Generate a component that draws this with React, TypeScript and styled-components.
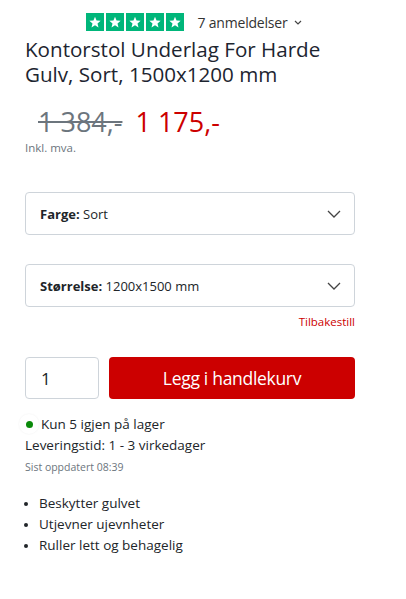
import React from "react";
import styled, { createGlobalStyle } from "styled-components";

const Global = createGlobalStyle`
  html, body { margin: 0; padding: 0; background: #fff; }
  body { font-family: "Open Sans", "Noto Sans", Arial, sans-serif; color: #212529; }
  * { box-sizing: border-box; }
`;

const Page = styled.div`
  width: 406px;
  padding: 0 51px 0 25px;
  display: flex;
  flex-direction: column;
`;

const ReviewRow = styled.div`
  display: flex;
  align-items: center;
  justify-content: center;
  gap: 14px;
  padding-top: 13px;
  padding-left: 8px;
  height: 31px;
`;

const Stars = styled.div`
  display: flex;
  gap: 2px;
`;

const StarBox = styled.div`
  width: 18px;
  height: 18px;
  background: #00b67a;
  display: flex;
  align-items: center;
  justify-content: center;
`;

const ReviewText = styled.span`
  font-size: 14px;
  color: #333;
  display: flex;
  align-items: center;
  gap: 7px;
  letter-spacing: -0.2px;
`;

const Title = styled.h1`
  margin: 6px 0 0;
  font-size: 20.6px;
  line-height: 24.5px;
  font-weight: 500;
  color: #1d2530;
`;

const PriceRow = styled.div`
  display: flex;
  align-items: baseline;
  gap: 13px;
  margin-top: 21px;
  padding-left: 13px;
  line-height: 30px;
`;

const OldPrice = styled.span`
  font-size: 27px;
  color: #6c757d;
  text-decoration: line-through;
  text-decoration-thickness: 2px;
`;

const NewPrice = styled.span`
  font-size: 27px;
  color: #cc0000;
`;

const VatNote = styled.div`
  font-size: 11.5px;
  line-height: 15px;
  color: #6c757d;
  margin-top: 3px;
`;

const Select = styled.div<{ $top: number }>`
  margin-top: ${(p) => p.$top}px;
  height: 43px;
  border: 1px solid #ced4da;
  border-radius: 4px;
  display: flex;
  align-items: center;
  justify-content: space-between;
  padding: 0 13px 0 14px;
  font-size: 13px;
  color: #212529;
`;

const Label = styled.b`
  font-weight: 700;
`;

const Reset = styled.div`
  align-self: flex-end;
  font-size: 11.5px;
  color: #cc0000;
  margin-top: 7px;
  line-height: 16px;
`;

const CartRow = styled.div`
  display: flex;
  gap: 10px;
  margin-top: 27px;
`;

const Qty = styled.div`
  width: 74px;
  height: 42px;
  border: 1px solid #ced4da;
  border-radius: 4px;
  display: flex;
  align-items: center;
  padding-left: 15px;
  font-size: 17px;
  color: #212529;
`;

const CartButton = styled.button`
  flex: 1;
  height: 42px;
  border: none;
  border-radius: 4px;
  background: #cc0000;
  color: #fff;
  font-family: inherit;
  font-size: 17.5px;
  letter-spacing: -0.3px;
`;

const Stock = styled.div`
  display: flex;
  align-items: center;
  gap: 2px;
  margin-top: 15px;
  font-size: 13.5px;
  line-height: 20px;
`;

const Dot = styled.span`
  width: 20px;
  height: 20px;
  border-radius: 50%;
  margin-left: -6px;
  box-shadow: 0 0 2px rgba(0, 0, 0, 0.07);
  display: flex;
  align-items: center;
  justify-content: center;
  &::after {
    content: "";
    width: 7px;
    height: 7px;
    border-radius: 50%;
    background: #0a8a0a;
  }
`;

const InfoLine = styled.div`
  font-size: 13.5px;
  line-height: 20px;
  margin-top: 1px;
`;

const Updated = styled.div`
  font-size: 10.5px;
  color: #6c757d;
  margin-top: 4px;
  line-height: 16px;
`;

const Bullets = styled.ul`
  margin: 18px 0 0;
  padding: 0 0 0 14px;
  font-size: 13.5px;
  line-height: 21px;
  li::marker { font-size: 12px; }
`;

const Star = () => (
  <svg width="12" height="12" viewBox="0 0 24 24">
    <path
      fill="#fff"
      d="M12 1.5l3.1 7.6 8.2.6-6.3 5.3 2 8-7-4.3-7 4.3 2-8L.7 9.7l8.2-.6z"
    />
  </svg>
);

const Chevron = () => (
  <svg width="14" height="8" viewBox="0 0 14 8" fill="none">
    <path d="M1 1l6 6 6-6" stroke="#444" strokeWidth="1.3" />
  </svg>
);

const SmallChevron = () => (
  <svg width="8" height="5" viewBox="0 0 8 5" fill="none">
    <path d="M1 1l3 3 3-3" stroke="#444" strokeWidth="1.2" />
  </svg>
);

export default function App() {
  return (
    <>
      <Global />
      <Page>
        <ReviewRow>
          <Stars>
            {[0, 1, 2, 3, 4].map((i) => (
              <StarBox key={i}>
                <Star />
              </StarBox>
            ))}
          </Stars>
          <ReviewText>
            7 anmeldelser <SmallChevron />
          </ReviewText>
        </ReviewRow>
        <Title>Kontorstol Underlag For Harde Gulv, Sort, 1500x1200 mm</Title>
        <PriceRow>
          <OldPrice>1 384,-</OldPrice>
          <NewPrice>1 175,-</NewPrice>
        </PriceRow>
        <VatNote>Inkl. mva.</VatNote>
        <Select $top={37}>
          <span>
            <Label>Farge:</Label> Sort
          </span>
          <Chevron />
        </Select>
        <Select $top={29}>
          <span>
            <Label>Størrelse:</Label> 1200x1500 mm
          </span>
          <Chevron />
        </Select>
        <Reset>Tilbakestill</Reset>
        <CartRow>
          <Qty>1</Qty>
          <CartButton>Legg i handlekurv</CartButton>
        </CartRow>
        <Stock>
          <Dot />
          Kun 5 igjen på lager
        </Stock>
        <InfoLine>Leveringstid: 1 - 3 virkedager</InfoLine>
        <Updated>Sist oppdatert 08:39</Updated>
        <Bullets>
          <li>Beskytter gulvet</li>
          <li>Utjevner ujevnheter</li>
          <li>Ruller lett og behagelig</li>
        </Bullets>
      </Page>
    </>
  );
}
